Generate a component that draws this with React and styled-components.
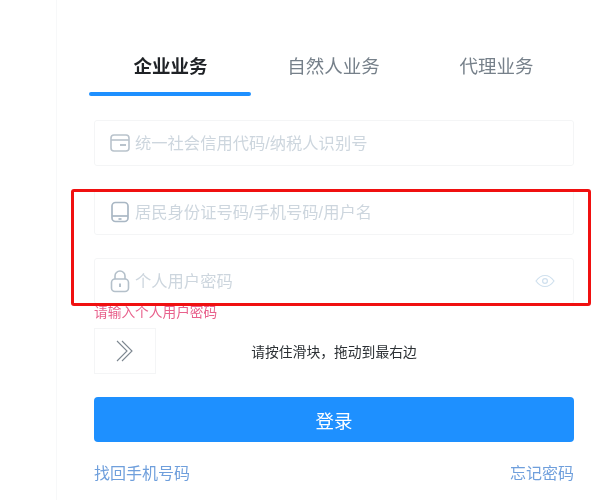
import { createGlobalStyle } from "styled-components";
import styled from "styled-components";

const GlobalStyle = createGlobalStyle`
  html, body {
    margin: 0;
    padding: 0;
    background: #fff;
  }
  body {
    font-family: "Liberation Sans", "Noto Sans CJK SC", sans-serif;
  }
`;

const CardIcon = () => (
  <svg width="20" height="18" viewBox="0 0 20 18" fill="none" stroke="#b9c3cc" strokeWidth="1.6">
    <rect x="1" y="1" width="18" height="16" rx="3" />
    <path d="M1 6h18" />
    <path d="M10 11h6" strokeWidth="2" />
  </svg>
);

const PhoneIcon = () => (
  <svg width="20" height="22" viewBox="0 0 20 22" fill="none" stroke="#a9b7c4" strokeWidth="1.7">
    <rect x="2" y="1.500" width="16" height="19" rx="3.500" />
    <path d="M2 15h16" />
    <path d="M8.500 18h3" />
  </svg>
);

const LockIcon = () => (
  <svg width="20" height="24" viewBox="0 0 20 24" fill="none" stroke="#b4c0ca" strokeWidth="1.6">
    <path d="M5 10V7a5 5 0 0 1 10 0v3" />
    <rect x="1.500" y="10" width="17" height="12.500" rx="3.500" />
    <path d="M10 14.500v3.500" strokeWidth="2" />
  </svg>
);

const EyeIcon = () => (
  <svg width="20" height="14" viewBox="0 0 20 14" fill="none" stroke="#cfe0ee" strokeWidth="1.2">
    <path d="M1 7c2.600-3.600 5.600-5.500 9-5.500S16.400 3.400 19 7c-2.600 3.600-5.600 5.500-9 5.500S3.600 10.600 1 7z" />
    <circle cx="10" cy="7" r="2.400" />
  </svg>
);

const ChevronsIcon = () => (
  <svg width="18" height="22" viewBox="0 0 18 22" fill="none" stroke="#7d8790" strokeWidth="1.100">
    <path d="M1 1l10 10L1 21" />
    <path d="M6 1l10 10L6 21" />
  </svg>
);

const App = () => {
  return (
    <Page>
      <GlobalStyle />
      <Panel>
        <Tabs>
          <Tab $active>企业业务</Tab>
          <Tab>自然人业务</Tab>
          <Tab>代理业务</Tab>
        </Tabs>
        <Form>
          <Field>
            <CardIcon />
            <input placeholder="统一社会信用代码/纳税人识别号" />
          </Field>
          <Field>
            <PhoneIcon />
            <input placeholder="居民身份证号码/手机号码/用户名" />
          </Field>
          <Field>
            <LockIcon />
            <input placeholder="个人用户密码" />
            <EyeIcon />
          </Field>
          <ErrorText>请输入个人用户密码</ErrorText>
          <Slider>
            <Handle>
              <ChevronsIcon />
            </Handle>
            <SliderText>请按住滑块，拖动到最右边</SliderText>
          </Slider>
          <LoginButton>登录</LoginButton>
          <Links>
            <a>找回手机号码</a>
            <a>忘记密码</a>
          </Links>
        </Form>
        <Highlight />
      </Panel>
    </Page>
  );
};

const Page = styled.div`
  width: 610px;
  height: 500px;
  overflow: hidden;
  padding-left: 56px;
  box-sizing: border-box;
  filter: blur(0.5px);
`;

const Panel = styled.div`
  position: relative;
  width: 530px;
  height: 500px;
  padding: 47px 0 0 32px;
  box-sizing: border-box;
  border-left: 1px solid #f7f8f9;
`;

const Tabs = styled.div`
  display: flex;
  width: 489px;
`;

const Tab = styled.div`
  flex: 1;
  height: 49px;
  box-sizing: border-box;
  padding-top: 1px;
  text-align: center;
  font-size: 18.500px;
  line-height: 38px;
  color: ${(p) => (p.$active ? "#1f2226" : "#76808a")};
  font-weight: ${(p) => (p.$active ? 700 : 400)};
  position: relative;
  &::after {
    content: "";
    display: ${(p) => (p.$active ? "block" : "none")};
    position: absolute;
    left: 0;
    right: 1px;
    bottom: 0;
    height: 4px;
    border-radius: 2px;
    background: #1e90ff;
  }
`;

const Form = styled.div`
  width: 480px;
  margin: 24px 0 0 5px;
`;

const Field = styled.div`
  display: flex;
  align-items: center;
  gap: 5px;
  height: 46px;
  padding: 0 18px 0 15px;
  margin-bottom: 23px;
  box-sizing: border-box;
  border: 1px solid #f4f5f6;
  border-radius: 3px;
  svg {
    flex: none;
  }
  input {
    flex: 1;
    min-width: 0;
    border: none;
    outline: none;
    background: transparent;
    padding: 1px 0 0;
    font-family: inherit;
    font-size: 16.300px;
    &::placeholder {
      color: #cdd6de;
      opacity: 1;
    }
  }
`;

const ErrorText = styled.div`
  margin-top: -23px;
  padding-top: 1px;
  height: 23px;
  font-size: 13.700px;
  line-height: 16px;
  color: #e8618c;
`;

const Slider = styled.div`
  position: relative;
  display: flex;
  align-items: center;
  height: 46px;
  margin-bottom: 23px;
`;

const Handle = styled.div`
  display: flex;
  align-items: center;
  justify-content: center;
  width: 62px;
  height: 46px;
  margin-right: -62px;
  box-sizing: border-box;
  border: 1px solid #f4f5f6;
`;

const SliderText = styled.div`
  flex: 1;
  text-align: center;
  font-size: 13.800px;
  color: #2a2f33;
`;

const LoginButton = styled.button`
  display: block;
  width: 100%;
  height: 45px;
  border: none;
  border-radius: 4px;
  background: #1e90ff;
  color: #fff;
  font-family: inherit;
  font-size: 18.500px;
`;

const Links = styled.div`
  display: flex;
  justify-content: space-between;
  margin-top: 22px;
  font-size: 16px;
  line-height: 20px;
  a {
    color: #6f9fdc;
  }
`;

const Highlight = styled.div`
  position: absolute;
  left: 14px;
  top: 189px;
  width: 520px;
  height: 117px;
  box-sizing: border-box;
  border: 3px solid #f01010;
  border-radius: 3px;
`;

export default App;
